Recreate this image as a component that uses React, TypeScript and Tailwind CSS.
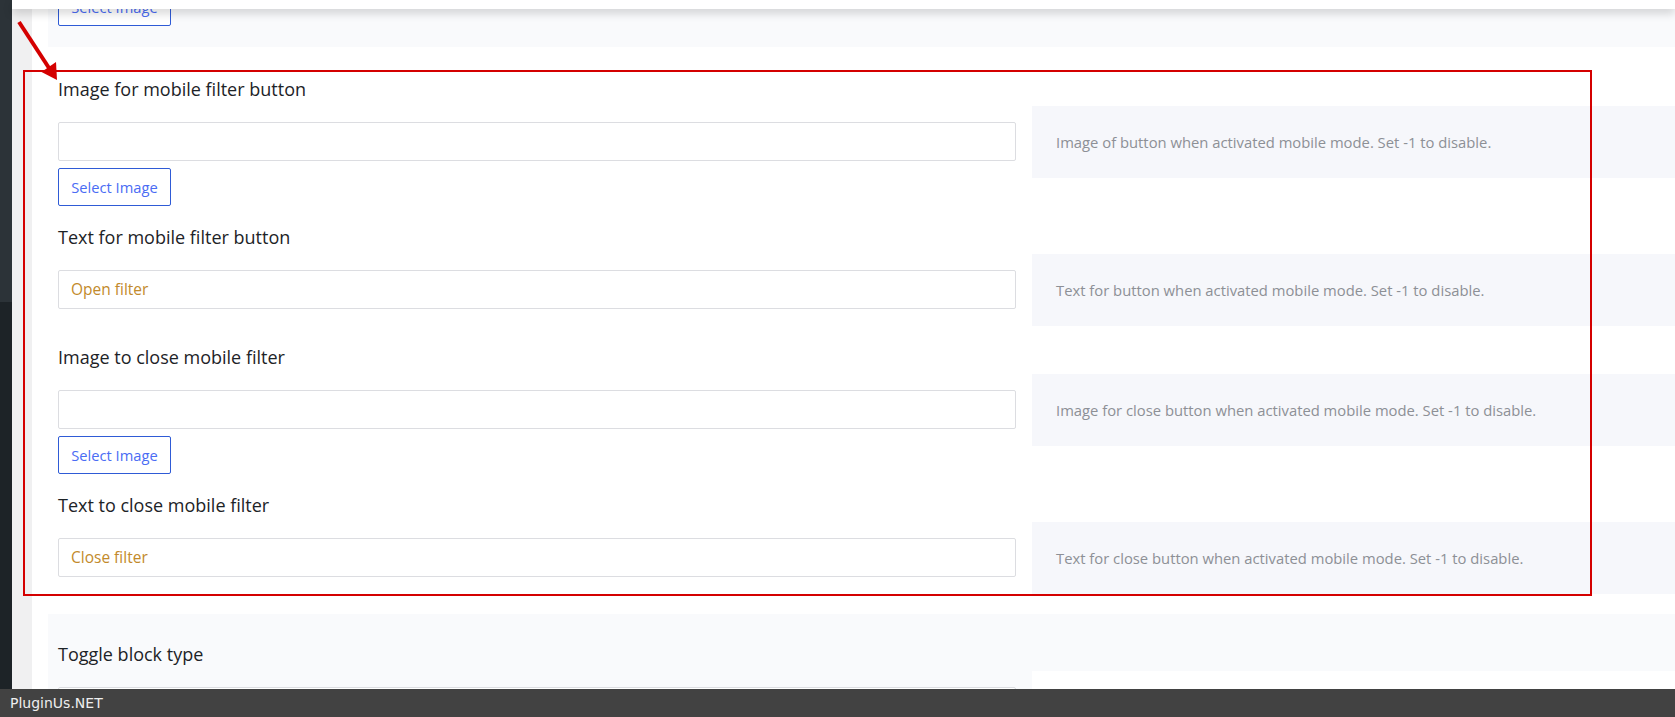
import React from "react";

interface Option {
  title: string;
  value: string;
  hasImage: boolean;
  description: string;
}

const options: Option[] = [
  {
    title: "Image for mobile filter button",
    value: "",
    hasImage: true,
    description: "Image of button when activated mobile mode. Set -1 to disable.",
  },
  {
    title: "Text for mobile filter button",
    value: "Open filter",
    hasImage: false,
    description: "Text for button when activated mobile mode. Set -1 to disable.",
  },
  {
    title: "Image to close mobile filter",
    value: "",
    hasImage: true,
    description: "Image for close button when activated mobile mode. Set -1 to disable.",
  },
  {
    title: "Text to close mobile filter",
    value: "Close filter",
    hasImage: false,
    description: "Text for close button when activated mobile mode. Set -1 to disable.",
  },
];

function SelectImageButton({ className = "" }: { className?: string }) {
  return (
    <button
      type="button"
      className={`block h-[38px] w-[113px] shrink-0 border border-[#2f5bd6] rounded-[2px] bg-white text-[14.7px] text-[#4a6cf4] ${className}`}
    >
      Select Image
    </button>
  );
}

function OptionRow({ option, descBg }: { option: Option; descBg: string }) {
  return (
    <div>
      <h4 className="h-6 leading-6 text-[18px] text-[#1d2327] mb-[5px]">{option.title}</h4>
      <div className="flex items-start gap-4">
        <div className="w-[958px] shrink-0 pt-4">
          <div className="h-[39px] border border-[#dcdde1] rounded-[2px] bg-white flex items-center px-3 text-[15.5px] text-[#c28a2b]">
            {option.value}
          </div>
          {option.hasImage && <SelectImageButton className="mt-[7px]" />}
        </div>
        <div className={`flex-1 h-[72px] flex items-center px-6 text-[14.8px] text-[#8d9096] ${descBg}`}>
          {option.description}
        </div>
      </div>
    </div>
  );
}

export default function App() {
  return (
    <div
      className="relative w-[1675px] h-[717px] overflow-hidden bg-white"
      style={{ fontFamily: "'Open Sans', 'Noto Sans', sans-serif" }}
    >
      <div className="flex h-[689px]">
        {/* admin sidebar edge */}
        <div className="w-3 shrink-0 flex flex-col">
          <div className="h-[302px] bg-[#2c3338]" />
          <div className="flex-1 bg-[#1d2327]" />
        </div>

        <div className="flex-1 flex flex-col min-w-0">
          {/* top bar */}
          <div className="relative z-10 h-[9px] bg-white shadow-[0_4px_10px_rgba(0,0,0,0.18)]" />

          <div className="flex flex-1 min-h-0">
            <div className="w-5 shrink-0 bg-[#f0f0f1]" />
            <div className="flex-1 pl-4 overflow-hidden">
              {/* previous section, scrolled up */}
              <div className="h-[38px] bg-[#f9fafc] px-[10px] overflow-hidden">
                <SelectImageButton className="-mt-[21px]" />
              </div>

              {/* mobile filter options */}
              <div className="pl-[10px] pt-[30px] pb-5 space-y-[19px]">
                {options.map((option) => (
                  <OptionRow key={option.title} option={option} descBg="bg-[#f6f7fb]" />
                ))}
              </div>

              {/* next section */}
              <div className="bg-[#f9fafc] pl-[10px] pt-[28px] pb-6">
                <OptionRow
                  option={{
                    title: "Toggle block type",
                    value: "",
                    hasImage: false,
                    description: "",
                  }}
                  descBg="bg-white"
                />
              </div>
            </div>
          </div>
        </div>
      </div>

      {/* annotation */}
      <div className="absolute left-[23px] top-[70px] w-[1569px] h-[526px] border-2 border-[#d40000] pointer-events-none" />
      <svg className="absolute left-0 top-0 pointer-events-none" width="70" height="90" viewBox="0 0 70 90">
        <line x1="19" y1="22" x2="49" y2="68" stroke="#d40000" strokeWidth="4" />
        <polygon points="57,80 41.5,72 56,62" fill="#d40000" />
      </svg>

      {/* watermark bar */}
      <div
        className="absolute left-0 bottom-0 w-full h-[28px] bg-[#424242] flex items-center pl-[10px] text-[14px] text-[#eeeeee]"
        style={{ fontFamily: "'DejaVu Sans', sans-serif" }}
      >
        PluginUs.NET
      </div>
    </div>
  );
}
